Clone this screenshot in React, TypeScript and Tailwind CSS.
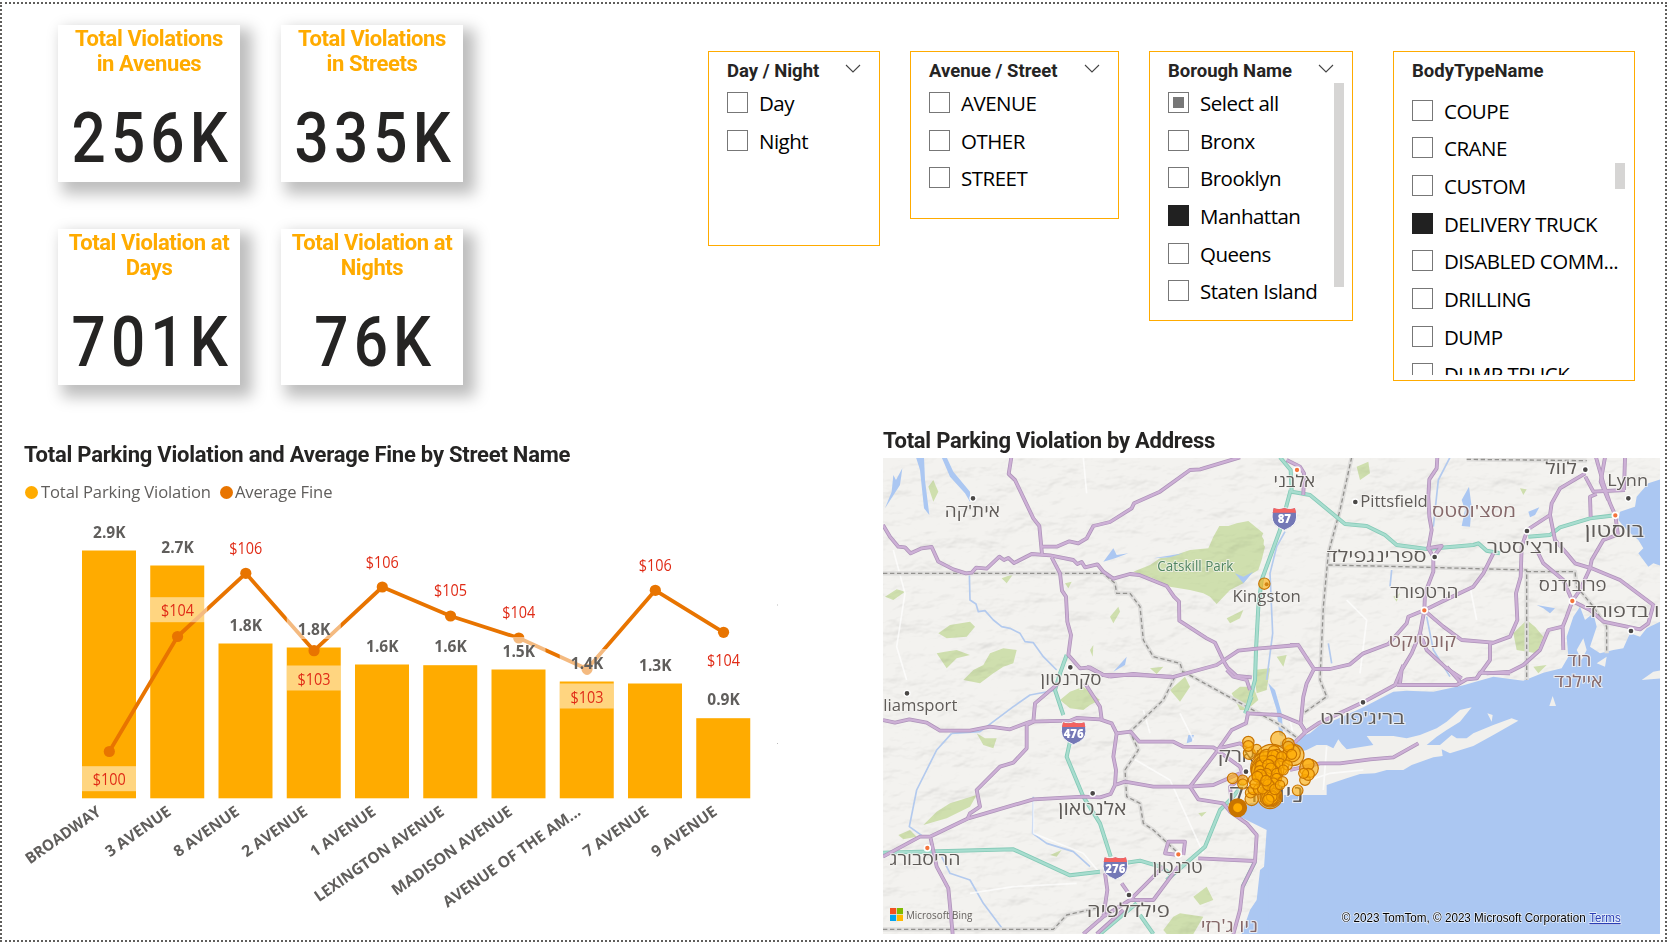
import type { ReactNode } from "react";

type CardData = { title: [string, string]; value: string };

const cards: CardData[] = [
  { title: ["Total Violations", "in Avenues"], value: "256K" },
  { title: ["Total Violations", "in Streets"], value: "335K" },
  { title: ["Total Violation at", "Days"], value: "701K" },
  { title: ["Total Violation at", "Nights"], value: "76K" },
];

function Card({ title, value }: CardData) {
  return (
    <div className="flex flex-col items-center bg-white font-['Roboto',sans-serif] shadow-[8px_8px_14px_4px_rgba(0,0,0,0.26)]">
      <div className="mt-[1px] text-center text-[22px] leading-[25px] font-bold tracking-[-0.4px] whitespace-nowrap text-[#ffab00]">
        <div>{title[0]}</div>
        <div>{title[1]}</div>
      </div>
      <div className="mt-[21px] scale-x-[0.86] pl-[8px] text-[70px] leading-[82px] font-medium tracking-[6px] text-[#252423]">{value}</div>
    </div>
  );
}

type State = "off" | "on" | "partial";

function Option({ label, state = "off" }: { label: string; state?: State }) {
  return (
    <div className="flex h-[37.7px] shrink-0 items-start">
      <div
        className={
          "flex h-[21px] w-[21px] shrink-0 items-center justify-center border " +
          (state === "on" ? "border-[#212121] bg-[#212121]" : "border-[#777777] bg-white")
        }
      >
        {state === "partial" && <div className="h-[11px] w-[11px] bg-[#777777]" />}
      </div>
      <div className="mt-[-3px] ml-[11px] h-[30px] text-[20.5px] leading-[29px] tracking-[-0.5px] whitespace-nowrap text-black">{label}</div>
    </div>
  );
}

function Chevron() {
  return (
    <svg width="16" height="10" viewBox="0 0 16 10" className="mt-[12px]">
      <path d="M1 1 L8 8 L15 1" fill="none" stroke="#444" strokeWidth="1.1" />
    </svg>
  );
}

function Slicer({ title, box, chevron, right, list, children, bar }: { title: string; box: string; chevron?: boolean; right?: string; list: string; children: ReactNode; bar?: string }) {
  return (
    <div className={"relative flex shrink-0 flex-col border border-[#ffab00] bg-white pl-[18px] " + box}>
      <div className={"flex h-[40px] shrink-0 justify-between " + (right ?? "")}>
        <div className="pt-[7px] font-['Roboto',sans-serif] text-[18.5px] leading-[24px] font-bold whitespace-nowrap text-[#252423]">{title}</div>
        {chevron && <Chevron />}
      </div>
      <div className={"flex flex-col " + list}>{children}</div>
      {bar && <div className={"absolute w-[10px] bg-[#d6d5d4] " + bar} />}
    </div>
  );
}

const streets = [
  { name: "BROADWAY", len: 88, top: 550, v: "2.9K", y: 751.5, f: "$100", fy: 785.7 },
  { name: "3 AVENUE", len: 76, top: 565, v: "2.7K", y: 636.5, f: "$104", fy: 616.7 },
  { name: "8 AVENUE", len: 76, top: 643, v: "1.8K", y: 573.3, f: "$106", fy: 554 },
  { name: "2 AVENUE", len: 76, top: 647, v: "1.8K", y: 650.7, f: "$103", fy: 685 },
  { name: "1 AVENUE", len: 76, top: 664, v: "1.6K", y: 587, f: "$106", fy: 568 },
  { name: "LEXINGTON AVENUE", len: 154, top: 664.7, v: "1.6K", y: 616, f: "$105", fy: 596.5 },
  { name: "MADISON AVENUE", len: 143, top: 669, v: "1.5K", y: 638, f: "$104", fy: 618.5 },
  { name: "AVENUE OF THE AM...", len: 164, top: 681, v: "1.4K", y: 669, f: "$103", fy: 703 },
  { name: "7 AVENUE", len: 76, top: 683, v: "1.3K", y: 590.3, f: "$106", fy: 571 },
  { name: "9 AVENUE", len: 76, top: 717.7, v: "0.9K", y: 632.3, f: "$104", fy: 666 },
];

function ComboChart() {
  const x0 = (i: number) => 82 + 68.25 * i;
  const cx = (i: number) => 109.3 + 68.25 * i;
  return (
    <svg width="780" height="410" viewBox="20 510 780 410" className="font-['Open_Sans',sans-serif]">
      {streets.map((s, i) => (
        <rect key={i} x={x0(i)} y={s.top + 0.5} width="54" height={797.8 - s.top} fill="#ffab00" />
      ))}
      <polyline points={streets.map((s, i) => `${cx(i)},${s.y}`).join(" ")} fill="none" stroke="#e87400" strokeWidth="3.8" strokeLinejoin="round" />
      {streets.map((s, i) => (
        <circle key={i} cx={cx(i)} cy={s.y} r="5.6" fill="#e87400" />
      ))}
      {streets.map((s, i) => (
        <g key={i} textAnchor="middle">
          <rect x={x0(i)} y={s.top - 32} width="54" height={i === 3 ? 24 : 25} fill="#fff" opacity="0.5" />
          <rect x={x0(i)} y={s.fy - 19.5} width={i === 1 ? 57 : 54} height="25" fill="#fff" opacity="0.5" />
          <text x={cx(i)} y={s.top - 12.5} fontSize="15.5" fontWeight="700" fill="#605e5c" textLength="32.5" lengthAdjust="spacingAndGlyphs">{s.v}</text>
          <text x={cx(i)} y={s.fy - 0.5} fontSize="16" fill="#e02b16" textLength="33" lengthAdjust="spacingAndGlyphs">{s.f}</text>
        </g>
      ))}
      {streets.map((s, i) => (
        <text key={i} transform={`translate(${(i ? 104 : 102) + 68.25 * i} 814) rotate(-35)`} textAnchor="end" fontSize="15.5" fontWeight="700" fill="#605e5c" textLength={s.len} lengthAdjust="spacingAndGlyphs">
          {s.name}
        </text>
      ))}
      <rect x="777" y="604.5" width="1" height="1" fill="#bbb" />
      <rect x="777" y="743" width="1" height="1" fill="#bbb" />
    </svg>
  );
}

// Map geometry is stored in four sheets (NW, NE, SW, SE), each with its own origin.
const sheet = { nw: "translate(0 0)", ne: "translate(1170 0)", sw: "translate(0 750)", se: "translate(1170 750)" };
type Sheet = keyof typeof sheet;

const purple: [Sheet, string][] = [
  ["nw", "M39 315 L60 350 85 380 105 382 122 400 155 385 185 381 205 425 250 448 288 460 305 458 318 443 350 446 388 410 402 420 415 414 432 429 485 402 540 406 610 420 622 432 635 426 645 442 682 433 700 455 730 476 780 462 808 465 890 498 912 530 927 545 928 602 1010 655 1035 668 1062 725 1072 742 1100 768 1145 772"],
  ["nw", "M424 112 L416 162 435 180 490 295 508 318 516 402"],
  ["nw", "M516 380 L560 380 598 364 625 370 650 355 670 318 720 306 785 265 792 250 870 215 960 150 990 148 1110 112"],
  ["nw", "M545 412 L570 460 576 512 588 530 592 605 603 645 595 705 630 745 660 742 700 765 720 770"],
  ["nw", "M720 770 L790 762 905 772 1040 735 1105 692 1160 686 1285 675"],
  ["ne", "M90 675 L115 675 162 747 210 747 270 733 310 700 385 672 440 610 445 590 492 571"],
  ["ne", "M162 747 L140 790 130 830 122 910 138 940"],
  ["ne", "M532 112 L530 145 508 178 505 230 508 290 515 330 505 385 520 410 520 455 495 520 493 571"],
  ["ne", "M493 571 L545 545 640 500 670 460 700 400"],
  ["ne", "M493 571 L550 620 605 660 700 668"],
  ["ne", "M493 571 L480 640 500 690 560 745 605 775"],
  ["ne", "M480 640 L455 700 425 750 420 790"],
  ["ne", "M801 333 L785 380 782 470 768 520 772 600 750 650 690 672 690 720 650 775"],
  ["ne", "M801 330 L870 285 875 250 900 205 976 160"],
  ["ne", "M870 285 L885 360 920 400 945 430 995 445 1080 480 1180 555 1165 610 1140 628 1030 605 990 570 937 543"],
  ["ne", "M1070 345 L1030 360 995 420 990 445 960 510 937 543 920 590 908 620 910 690"],
  ["ne", "M830 390 L850 430 910 480 937 543"],
  ["ne", "M908 620 L865 630 840 690 790 735 750 755 680 760"],
  ["ne", "M1008 112 L1030 190 1050 250 1066 286 1074 345"],
  ["ne", "M1035 112 L1022 185 1045 240"],
  ["ne", "M976 170 L1000 215 1095 210 M1095 112 L1092 210 M992 290 L990 230 1010 222"],
  ["ne", "M80 120 L120 140 132 160 130 225"],
  ["ne", "M500 385 L545 378 525 405"],
  ["sw", "M39 150 L75 158 118 148 170 158 210 182 300 182 360 170 420 178 480 155 600 152 620 144 690 148 725 160 740 190 782 185 808 215 910 215 940 230 1030 232 1045 242"],
  ["sw", "M565 40 L495 100 490 155 470 165 470 235 430 278 390 290 320 360 330 410 300 430 292 448"],
  ["sw", "M645 40 L690 110 695 148"],
  ["sw", "M39 560 L150 500 180 500 295 445 490 388 640 380 690 382 722 372 735 345 765 335 850 350 960 350 1030 345 1110 310"],
  ["sw", "M740 190 L730 260 738 300 735 345"],
  ["sw", "M650 -10 L700 15 800 15 905 20"],
  ["sw", "M1135 125 L1128 160 1085 180 1040 245 960 350 985 388 1060 400 1080 425 1130 460 1160 495 1155 575 1118 650 1110 720 1090 792"],
  ["sw", "M1040 240 L1110 290 1120 320 1080 350 1085 400 M1045 235 L1110 220 1130 232"],
  ["sw", "M1070 0 L1090 20 1130 30 1140 60"],
  ["sw", "M182 505 L200 590 235 655 248 792"],
  ["sw", "M925 555 L885 550 895 515 945 515 940 555 M985 565 L1155 573"],
  ["sw", "M925 590 L850 690 780 690 700 740 640 792 M880 590 L780 690 M705 610 L712 660 700 740 M755 640 L790 690 M760 720 L680 792"],
  ["sw", "M1130 130 L1230 135 1290 160 1308 185"],
  ["se", "M130 190 L175 160 309 97 405 45 430 -15 M410 45 L590 45 620 28 650 25 660 8 750 10"],
  ["se", "M560 -10 L600 35 M135 188 L70 250"],
  ["se", "M90 300 L180 280 240 280 330 268 400 262 475 220"],
];

const teal: [Sheet, string][] = [
  ["ne", "M60 112 L92 150 95 215 150 225 255 312 320 318 375 345 410 375 500 387 640 375 655 370 680 392 720 400"],
  ["ne", "M92 210 L60 330 5 480 -5 560 -12 690 -15 780 -40 870"],
  ["ne", "M805 350 L870 345 900 322 990 295 1066 286"],
  ["nw", "M590 705 L570 760 555 810 580 885"],
  ["sw", "M600 215 L590 260 640 380 690 460 722 560"],
  ["sw", "M39 548 L430 538 600 616 690 605"],
  ["sw", "M770 578 L810 572 870 590 900 610"],
  ["sw", "M1145 80 L1125 130 M1120 340 L1090 380 1050 420 1005 530 890 630 M800 700 L690 792 M810 735 L850 792 M1155 575 L1118 650"],
];

const rivers: [Sheet, string][] = [
  ["nw", "M298 460 L300 540 318 552 325 575 345 572 370 600 395 620 420 625 450 640 465 665 490 668 520 710 560 750"],
  ["ne", "M75 335 L50 380 30 460 38 640 20 780"],
  ["sw", "M245 190 L200 240 140 360 118 470 160 500 M215 560 L240 610 300 630 340 700 400 780"],
  ["sw", "M245 190 L330 185 430 110 480 75 560 60"],
  ["sw", "M490 380 L488 490 530 520 610 545 660 590"],
  ["ne", "M570 112 L535 180 520 320 M500 590 L520 690 570 770 M395 450 L390 500 M205 670 L215 730"],
];

const borders: [Sheet, string][] = [
  ["nw", "M39 460 L700 460 735 490 740 520 780 520 810 560 820 660 850 710 930 730 940 760"],
  ["sw", "M915 20 L880 90 780 185 805 240 765 300 770 380 810 400 820 460 850 480 920 545"],
  ["sw", "M940 5 L1230 165 1290 210"],
  ["ne", "M275 112 L240 270 205 400 190 560 180 780 200 830 130 880"],
  ["ne", "M205 435 L430 440 800 450 800 780 M800 455 L945 455 950 500 1000 560 1040 620 1040 700 M620 118 L980 122"],
  ["sw", "M39 778 L550 778 590 735 690 712"],
];

const greens: [Sheet, string][] = [
  ["nw", "M1048 318 L1075 318 1100 310 1135 303 1180 340 1170 360 1185 380 1175 420 1165 450 1140 465 1120 490 1080 510 1040 552 1020 530 1000 520 960 510 900 500 850 475 790 455 840 435 870 415 900 410 960 390 1015 385 1030 350Z"],
  ["nw", "M205 640 L240 615 300 605 315 620 290 650 230 655Z"],
  ["nw", "M310 750 L340 735 360 700 400 685 440 690 430 730 400 740 370 760 330 790 280 780Z"],
  ["nw", "M175 200 L190 180 205 215 190 245Z"],
  ["nw", "M200 700 L225 695 260 690 300 705 260 715 230 745Z"],
  ["nw", "M720 590 L745 560 750 575 730 610Z"],
  ["nw", "M1070 595 L1120 570 1110 595 1080 610Z"],
  ["nw", "M45 530 L80 508 105 515 70 540Z M395 475 L430 462 410 490Z M585 490 L605 485 595 505Z"],
  ["nw", "M660 690 L670 675 668 710Z M840 745 L880 740 860 762Z"],
  ["sw", "M570 90 L600 65 640 50 690 90 660 105 640 120 600 115Z"],
  ["sw", "M160 465 L200 425 240 400 320 375 300 410 230 445Z"],
  ["sw", "M1085 70 L1110 50 1150 50 1165 90 1130 120 1110 120Z M1150 0 L1200 -5 1190 60 1160 70Z"],
  ["sw", "M900 60 L945 20 960 50 930 95Z"],
  ["sw", "M880 780 L910 740 930 730 1000 740 970 792 890 792Z"],
  ["sw", "M970 680 L1010 650 1030 690 990 705Z M985 430 L1010 425 995 440Z M85 495 L120 480 140 500 100 508Z"],
  ["sw", "M320 190 L345 205 380 205 370 235 340 225Z M540 555 L575 540 560 560Z"],
  ["ne", "M290 140 L325 125 330 160 300 180Z M0 340 L12 360 8 400 0 410Z"],
  ["ne", "M760 640 L800 600 825 620 850 650 830 700 770 690Z M820 740 L860 735 835 760Z"],
  ["ne", "M50 710 L80 705 70 740Z M400 530 L420 520 410 545Z M780 205 L800 208 790 225Z"],
];

const lakes: [Sheet, string][] = [
  ["nw", "M138 112 L162 112 165 180 178 285 162 265 150 150Z"],
  ["nw", "M215 112 L230 112 250 155 300 215 300 245 285 220 240 170Z"],
  ["nw", "M97 145 L90 195 45 265 65 215 70 165 78 180Z"],
  ["ne", "M627 200 L635 260 630 320 605 318 615 270 605 240Z"],
  ["ne", "M805 275 L838 262 825 285 810 292Z M830 555 L885 565 870 580 850 565Z"],
  ["nw", "M700 425 L730 385 740 405 775 400 735 415Z M850 415 L940 400 900 412Z"],
  ["nw", "M730 755 L770 710 765 735Z"],
  ["nw", "M1095 460 L1120 470 1150 455 1120 490Z"],
  ["se", "M25 40 L45 60 65 130 70 200 58 195 50 120Z"],
  ["sw", "M950 220 L955 195 972 195 965 215Z"],
  ["sw", "M1170 600 L1195 580 1195 792 1115 792 1140 720 1160 690Z"],
];

const labels: [Sheet, string, number, number, number, number, string][] = [
  ["nw", "אית'קה", 307, 290, 165, 50, "#5f5b58"],
  ["nw", "Catskill Park", 976, 452, 228, 42, "#4f8560"],
  ["nw", "Kingston", 1190, 545, 205, 50, "#5f5b58"],
  ["ne", "אלבני", 103, 200, 125, 50, "#5f5b58"],
  ["ne", "Pittsfield", 402, 262, 203, 51, "#5f5b58"],
  ["ne", "מסצ'וסטס", 642, 290, 252, 50, "#86696a"],
  ["ne", "ספרינגפילד", 350, 425, 300, 50, "#5f5b58"],
  ["ne", "לוול", 903, 162, 95, 50, "#5f5b58"],
  ["ne", "Lynn", 1103, 198, 122, 51, "#5f5b58"],
  ["ne", "בוסטון", 1063, 352, 178, 58, "#5f5b58"],
  ["ne", "וורצ'סטר", 797, 398, 232, 50, "#5f5b58"],
  ["ne", "הרטפורד", 493, 535, 205, 50, "#5f5b58"],
  ["ne", "פרובידנס", 938, 512, 203, 50, "#5f5b58"],
  ["ne", "ו בדפורד", 1088, 592, 222, 50, "#5f5b58"],
  ["ne", "קונטיקט", 487, 682, 203, 50, "#86696a"],
  ["ne", "רוד", 958, 738, 72, 50, "#86696a"],
  ["se", "איילנד", 955, 50, 145, 50, "#86696a"],
  ["sw", "סקרנטון", 603, 45, 183, 50, "#5f5b58"],
  ["sw", "liamsport", 151, 123, 222, 51, "#5f5b58"],
  ["sw", "אלנטאון", 667, 435, 205, 54, "#5f5b58"],
  ["sw", "הריסבורג", 165, 585, 213, 50, "#5f5b58"],
  ["sw", "טרנטון", 923, 608, 150, 50, "#5f5b58"],
  ["sw", "פילדלפיה", 775, 740, 250, 56, "#5f5b58"],
  ["sw", "ניו ג'רזי", 1078, 785, 172, 52, "#86696a"],
  ["se", "בריג'פורט", 307, 162, 254, 50, "#5f5b58"],
  ["sw", "ניוארק", 1130, 275, 174, 54, "#5f5b58"],
  ["sw", "ניו יורק", 1187, 395, 228, 68, "#5f5b58"],
];

const towns: [Sheet, number, number][] = [
  ["nw", 309, 235], ["nw", 601, 742], ["ne", 286, 246], ["ne", 976, 149], ["ne", 1105, 235], ["ne", 801, 333], ["ne", 524, 411],
  ["ne", 1113, 633], ["sw", 111, 70], ["sw", 668, 370], ["sw", 777, 675], ["sw", 1128, 305], ["se", 309, 97],
];
const capitals: [Sheet, number, number][] = [
  ["ne", 111, 150], ["ne", 1066, 286], ["ne", 493, 571], ["ne", 937, 543], ["sw", 172, 534], ["sw", 925, 553],
];
const shields: [Sheet, number, number, string][] = [
  ["ne", 73, 295, "87"], ["sw", 611, 188, "476"], ["sw", 736, 593, "276"],
];

const bubbles: [number, number, number][] = [
  [235, 57, 23], [148, 100, 18], [170, 88, 15], [145, 66, 17], [145, 78, 16], [98, 175, 16], [155, 237, 20], [128, 180, 15], [128, 192, 15],
  [216, 125, 52], [202, 145, 50], [198, 150, 44], [195, 155, 40], [205, 150, 38], [205, 165, 36], [280, 105, 32], [275, 100, 26], [265, 72, 18], [265, 80, 16], [275, 103, 15],
  [327, 145, 28], [325, 133, 17], [315, 180, 16], [325, 163, 18], [311, 160, 15], [293, 211, 16],
  [210, 230, 36], [211, 230, 31], [212, 230, 27], [213, 232, 22], [215, 230, 16], [205, 240, 17], [160, 180, 15], [152, 218, 16], [160, 208, 16], [175, 208, 15], [188, 206, 16],
  [190, 130, 22], [185, 140, 20], [200, 110, 22], [180, 155, 18], [222, 95, 18], [230, 105, 17], [220, 108, 18], [215, 122, 16], [245, 110, 15], [240, 130, 15], [262, 135, 15], [205, 135, 17], [212, 145, 16], [200, 160, 15], [190, 175, 16],
  [230, 160, 15], [230, 175, 15], [248, 185, 15], [220, 190, 16], [205, 195, 17], [225, 208, 16], [182, 165, 17], [172, 170, 16], [250, 150, 15], [240, 195, 14], [165, 192, 15], [198, 182, 16],
];

function MapView() {
  const ways = (list: [Sheet, string][], stroke: string, width: number) => (
    <g fill="none" stroke={stroke} strokeWidth={width} strokeLinejoin="round">
      {list.map(([s, d], i) => (
        <path key={i} d={d} transform={sheet[s]} />
      ))}
    </g>
  );
  const areas = (list: [Sheet, string][], fill: string) => list.map(([s, d], i) => <path key={i} d={d} transform={sheet[s]} fill={fill} />);
  return (
    <svg width="777" height="476" viewBox="39 114 2331 1428" className="block font-['Open_Sans',sans-serif]" preserveAspectRatio="none">
      <defs>
        <filter id="relief" x="0" y="0" width="100%" height="100%">
          <feTurbulence type="fractalNoise" baseFrequency="0.009 0.016" numOctaves="4" seed="8" />
          <feDiffuseLighting surfaceScale="14" lightingColor="#ffffff" diffuseConstant="1.2">
            <feDistantLight azimuth="235" elevation="55" />
          </feDiffuseLighting>
        </filter>
      </defs>
      <rect x="39" y="114" width="2331" height="1428" fill="#f3f2ef" />
      {areas(greens, "#cfdfae")}
      <rect x="39" y="114" width="2331" height="1428" filter="url(#relief)" className="opacity-20 mix-blend-multiply" />
      <g fill="#abc7f2">
        <path
          transform={sheet.se}
          d="M-5 800 L0 740 10 620 20 480 -10 465 -60 440 -90 425 -30 400 40 380 60 260 60 215 110 205 150 190 180 165 230 148 310 112 400 65 440 62 520 65 610 46 700 20 790 32 850 8 905 -5 925 -40 920 -100 940 -160 960 -190 975 -150 1000 -170 1010 -130 990 -70 1020 -50 1060 -60 1090 -65 1110 -110 1140 -100 1160 -125 1210 -150 1210 800Z"
        />
        <path transform={sheet.ne} d="M1210 175 L1165 190 1130 230 1125 260 1080 275 1075 300 1100 330 1135 360 1150 385 1135 400 1165 440 1180 430 1210 440Z" />
        {areas(lakes, "#abc7f2")}
      </g>
      <g fill="#f1f0ed" transform={sheet.se}>
        <path d="M50 375 L200 375 200 345 260 325 300 312 345 310 380 300 430 300 455 285 520 262 548 258 545 238 570 250 640 228 700 195 775 152 755 145 700 165 640 190 620 205 590 205 575 195 540 225 500 225 530 200 560 180 600 155 635 112 600 120 560 155 530 175 480 195 440 205 400 198 320 198 340 225 260 238 245 222 235 208 220 235 200 225 170 225 140 240 120 245 60 235Z" />
        <path d="M682 130 L698 135 695 155Z M868 108 L878 78 888 108Z M1145 30 L1180 5 1210 0 1210 25Z M950 -60 L970 -95 980 -60 965 -30Z M1010 -20 L1040 -40 1035 -10Z" />
      </g>
      {ways(rivers, "#b3caee", 5)}
      <g fill="none" stroke="#ffffff" strokeWidth="5" opacity="0.7">
        <path d="M70 390 L105 520 80 680 110 780 M490 1140 L490 1240 640 1300 690 1360 M640 114 L650 220 M1260 900 L1300 1080 M1430 540 L1490 600 1470 760 M300 1420 L430 1400 620 1390 M780 1010 L900 1080 1000 1300 M1800 500 L1820 600" />
        <path d="M1290 1090 L1380 1060 1480 1050 M1370 980 L1360 1110 M820 870 L840 940 M930 880 L970 960" />
      </g>
      {ways(borders, "#dedddb", 13)}
      <g strokeDasharray="13 8">{ways(borders, "#93928f", 4)}</g>
      {ways(teal, "#85cab7", 12)}
      {ways(teal, "#a8ddcf", 7)}
      {ways(purple, "#ae93b9", 11.5)}
      {ways(purple, "#cdb0d6", 7)}
      {towns.map(([s, x, y], i) => (
        <circle key={i} transform={sheet[s]} cx={x} cy={y} r="9" fill="#4a4846" stroke="#fff" strokeWidth="4" />
      ))}
      {capitals.map(([s, x, y], i) => (
        <circle key={i} transform={sheet[s]} cx={x} cy={y} r="9" fill="#f4743b" stroke="#fff" strokeWidth="5" />
      ))}
      {labels.map(([s, t, x, y, w, size, fill], i) => (
        <text key={i} transform={sheet[s]} x={x} y={y} textAnchor="middle" fontSize={size} fill={fill} textLength={w} lengthAdjust="spacingAndGlyphs" stroke="#f5f4f2" strokeWidth="6" strokeOpacity="0.75" paintOrder="stroke">
          {t}
        </text>
      ))}
      {shields.map(([s, x, y, n], i) => (
        <g key={i} transform={sheet[s]}>
          <g transform={`translate(${x} ${y})`}>
            <path d="M-33 -32 Q-16 -26 0 -32 Q16 -26 33 -32 Q42 0 30 17 Q20 28 0 36 Q-20 28 -30 17 Q-42 0 -33 -32Z" fill="#7478b6" stroke="#f7f7f7" strokeWidth="3" />
            <path d="M-32 -31 Q-16 -25 0 -31 Q16 -25 32 -31 L35 -17 -35 -17Z" fill="#f4625f" />
            <text y="15" textAnchor="middle" fontSize="36" fontWeight="800" fill="#fff" textLength={n.length * 20} lengthAdjust="spacingAndGlyphs">{n}</text>
          </g>
        </g>
      ))}
      <g fill="#ffab00" fillOpacity="0.6" stroke="#c87400" strokeWidth="3.4">
        <circle cx="1183" cy="491" r="17" />
        <circle cx="1190" cy="493" r="6" stroke="none" fill="#c87400" fillOpacity="0.8" />
        <g transform="translate(990 900)">
          {bubbles.map(([x, y, r], i) => (
            <circle key={i} cx={x} cy={y} r={r} />
          ))}
          <circle cx="113" cy="263" r="21" fillOpacity="1" strokeWidth="15" />
        </g>
      </g>
      <g transform="translate(0 750)">
        <rect x="60" y="714" width="18.5" height="18.5" fill="#f25022" />
        <rect x="80.5" y="714" width="18.5" height="18.5" fill="#7fba00" />
        <rect x="60" y="734.5" width="18.5" height="18.5" fill="#00a4ef" />
        <rect x="80.5" y="734.5" width="18.5" height="18.5" fill="#ffb900" />
        <text x="108" y="747" fontSize="35" fill="#66625f" textLength="199" lengthAdjust="spacingAndGlyphs">Microsoft Bing</text>
      </g>
      <g transform="translate(1170 750)" className="font-['Liberation_Sans',sans-serif]" fontSize="38.5" stroke="#fff" strokeWidth="4" strokeOpacity="0.8" paintOrder="stroke">
        <text x="245" y="756" fill="#000" textLength="732" lengthAdjust="spacingAndGlyphs">© 2023 TomTom, © 2023 Microsoft Corporation</text>
        <text x="988" y="756" fill="#2a3fb5" textLength="94" lengthAdjust="spacingAndGlyphs" textDecoration="underline">Terms</text>
      </g>
    </svg>
  );
}

export default function App() {
  return (
    <div className="h-[942px] w-[1667px] overflow-hidden bg-white pt-[2px] font-['Open_Sans',sans-serif]">
      <main className="flex h-[940px] flex-col border-2 border-dotted border-[#605e5c]">
        <div className="flex h-[417px] shrink-0 items-start">
          <div className="mt-[21px] ml-[56px] grid shrink-0 grid-cols-[182px_182px] grid-rows-[157px_156px] gap-x-[41px] gap-y-[47px]">
            {cards.map((c, i) => (
              <Card key={i} {...c} />
            ))}
          </div>
          <div className="mt-[47px] ml-[245px] flex items-start">
            <Slicer title="Day / Night" box="mr-[30px] h-[195px] w-[172px]" list="" chevron right="pr-[18px]">
              <Option label="Day" />
              <Option label="Night" />
            </Slicer>
            <Slicer title="Avenue / Street" box="mr-[30px] h-[168px] w-[209px]" list="" chevron right="pr-[18px]">
              <Option label="AVENUE" />
              <Option label="OTHER" />
              <Option label="STREET" />
            </Slicer>
            <Slicer title="Borough Name" box="mr-[40px] h-[270px] w-[204px]" list="" chevron right="pr-[18px]" bar="top-[31px] right-[8px] h-[204px]">
              <Option label="Select all" state="partial" />
              <Option label="Bronx" />
              <Option label="Brooklyn" />
              <Option label="Manhattan" state="on" />
              <Option label="Queens" />
              <Option label="Staten Island" />
            </Slicer>
            <Slicer title="BodyTypeName" box="h-[330px] w-[242px]" list="h-[283px] overflow-hidden pt-[7.5px]" bar="top-[111px] right-[9px] h-[26px]">
              <Option label="COUPE" />
              <Option label="CRANE" />
              <Option label="CUSTOM" />
              <Option label="DELIVERY TRUCK" state="on" />
              <Option label="DISABLED COMM..." />
              <Option label="DRILLING" />
              <Option label="DUMP" />
              <Option label="DUMP TRUCK" />
            </Slicer>
          </div>
        </div>
        <div className="flex grow">
          <section className="w-[881px] shrink-0 pl-[18px]">
            <h2 className="mt-[20px] ml-[4px] font-['Roboto',sans-serif] text-[22px] leading-[28px] font-bold tracking-[-0.23px] whitespace-nowrap text-[#252423]">
              Total Parking Violation and Average Fine by Street Name
            </h2>
            <div className="mt-[11px] ml-[5px] flex h-[24px] items-center text-[16.6px] tracking-[-0.13px] text-[#605e5c]">
              <span className="mr-[3px] h-[13px] w-[13px] rounded-full bg-[#ffab00]" />
              <span>Total Parking Violation</span>
              <span className="mr-[2px] ml-[9px] h-[13px] w-[13px] rounded-full bg-[#e87400]" />
              <span>Average Fine</span>
            </div>
            <div className="mt-[6px]">
              <ComboChart />
            </div>
          </section>
          <section className="w-[777px] shrink-0">
            <h2 className="mt-[6px] mb-[3px] font-['Roboto',sans-serif] text-[22px] leading-[28px] font-bold tracking-[-0.26px] whitespace-nowrap text-[#252423]">
              Total Parking Violation by Address
            </h2>
            <MapView />
          </section>
        </div>
      </main>
    </div>
  );
}
